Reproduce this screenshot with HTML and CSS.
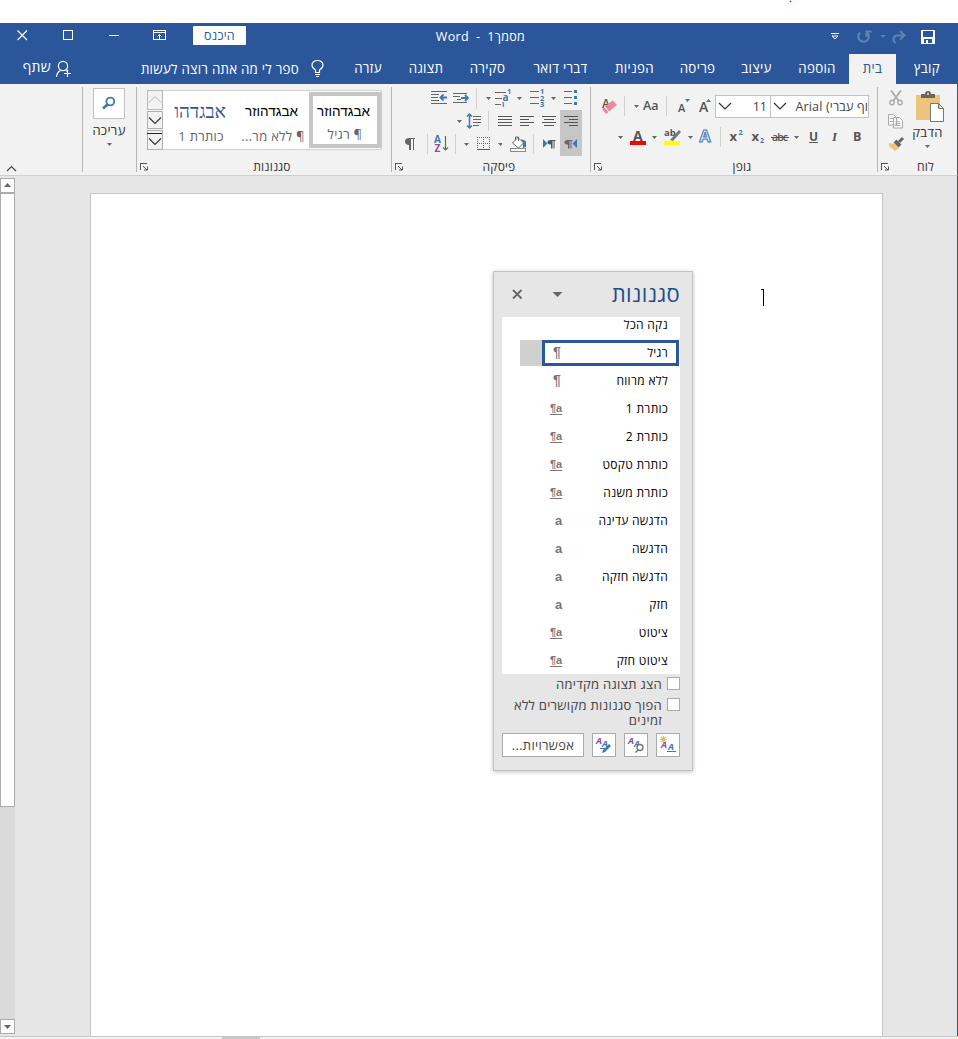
FILE: index.html
```html
<!DOCTYPE html>
<html lang="he">
<head>
<meta charset="utf-8">
<title>Word</title>
<link rel="stylesheet" href="styles.css">
</head>
<body>
<div class="app">
  <div class="strip"><svg width="958" height="23" viewBox="0 0 958 23"><path d="M789 1h3v1h-3zM790 0h1v3h-1z" fill="#fbb"/><path d="M790 1h1v1h-1z" fill="#e00"/></svg></div>

  <header class="titlebar">
    <svg width="193" height="31" viewBox="0 23 193 31" fill="none" stroke="#fff">
      <path d="M17.500 30.500l9.500 9.500M27 30.500l-9.500 9.500" stroke-width="1.100"/>
      <path class="crisp" d="M63.500 30.500h9v9h-9zM109 35.500h10M153.500 30.500h12v9h-12zM153 32.500h13"/>
      <path d="M159.500 39v-4.500M157.500 36.500l2-2 2 2"/>
    </svg>
    <button class="signin" dir="rtl">היכנס</button>
    <div class="doc-title" dir="rtl">מסמך1  -  Word</div>
    <svg width="243" height="31" viewBox="715 23 243 31" fill="none" stroke="#fff">
      <path class="crisp" d="M831 33.500h8"/><path d="M832 36l3 3 3-3z"/>
      <g stroke="#5f82b8" stroke-width="2"><path d="M860 32.500a5.300 5.300 0 1 0 6.500-.5M866.500 37v-5.500h5M904 35.500h-6.500q-4 0-4 4.500 0 2 2 3M900 31l4.500 4.500-4.500 4"/></g>
      <path d="M880.500 35h5l-2.500 3z" fill="#5f82b8" stroke="none"/>
      <path class="crisp" fill="#fff" stroke="none" fill-rule="evenodd" d="M921 30h14v14h-14zM923 31v6h10v-6zM924 39v4h2v-3h2v3h4v-4z"/>
    </svg>
  </header>

  <nav class="tabs">
    <span class="share" dir="rtl">שתף</span>
    <svg width="25" height="30" viewBox="51 54 25 30" fill="none" stroke="#fff" stroke-width="1.200"><circle cx="63" cy="66" r="4.600"/><path d="M56.500 77q.5-5 4-6.500M66 70.500l1.500 1M67.500 69.500v7.500M64 73.500h7"/></svg>
    <span class="tell" dir="rtl">ספר לי מה אתה רוצה לעשות</span>
    <svg width="41" height="30" viewBox="299 54 41 30" fill="none" stroke="#fff" stroke-width="1.200"><path d="M315.500 72.500v-2.500q-3.500-2-3.500-5a5.500 4.500 0 0 1 11 0q0 3-3.500 5v2.500zM315 74.500h5M316 76.500h3"/></svg>
    <span dir="rtl">עזרה</span><span dir="rtl">תצוגה</span><span dir="rtl">סקירה</span><span dir="rtl">דברי דואר</span><span dir="rtl">הפניות</span><span dir="rtl">פריסה</span><span dir="rtl">עיצוב</span><span dir="rtl">הוספה</span><span class="active" dir="rtl">בית</span><span dir="rtl">קובץ</span>
  </nav>

  <section class="ribbon">
    <div class="group g-blank">
      <svg width="82" height="91" viewBox="0 84 82 91" fill="none" stroke="#444" stroke-width="1.200"><path d="M7 171l4.500-4.500 4.500 4.500"/></svg>
    </div>
    <div class="group g-edit">
      <div class="find"><svg width="30" height="29" viewBox="94 89 30 29" fill="none" stroke="#3f78b5"><circle cx="110.300" cy="101.500" r="3.900" stroke-width="1.800"/><path d="M107.500 104.500l-4.500 4" stroke-width="2.800"/></svg></div>
      <span class="cap edit-cap" dir="rtl">עריכה</span>
      <svg width="7" height="5" viewBox="0 0 7 5"><path d="M1 1h5l-2.500 3z" fill="#666"/></svg>
    </div>
    <div class="group g-styles">
      <div class="body">
        <div class="gallery">
          <div class="spin">
            <svg width="16" height="20" viewBox="147 90 16 20" fill="none" stroke="#b8b8b8"><path class="crisp" d="M147.500 90.500h15v19h-15z"/><path d="M149 102.500l6-6 6 6"/></svg>
            <svg width="16" height="20" viewBox="147 110 16 20" fill="none" stroke="#b0b0b0"><path class="crisp" d="M147.500 111.500h15v17h-15z"/><path stroke="#333" stroke-width="1.200" d="M149 117.500l6 6 6-6"/></svg>
            <svg width="16" height="20" viewBox="147 130 16 20" fill="none" stroke="#b0b0b0"><path class="crisp" d="M147.500 130.500h15v18.500h-15z"/><path class="crisp" stroke="#222" d="M147 133.500h15"/><path stroke="#333" stroke-width="1.200" d="M149 138.500l6 6 6-6"/></svg>
          </div>
          <div class="style h1"><b dir="rtl">אבגדהו</b><i dir="rtl">כותרת 1</i></div>
          <div class="style"><b dir="rtl">אבגדהוזר</b><i dir="rtl">¶ ללא מר...</i></div>
          <div class="style on"><b dir="rtl">אבגדהוזר</b><i dir="rtl">¶ רגיל</i></div>
        </div>
      </div>
      <footer><svg width="16" height="16" viewBox="0 0 16 16" fill="none" stroke="#555"><path class="crisp" d="M3.500 11V4.500H10"/><path d="M6 7l4 4M10.500 7.500v3.500H7"/></svg><span dir="rtl">סגנונות</span></footer>
    </div>
    <div class="group g-para">
      <div class="body rows">
        <div class="row r1">
          <svg width="84" height="24" viewBox="392 87 84 24" fill="none" stroke="#666"><path class="crisp" d="M431 91.500h16M431 94.500h8M431 97.500h7M431 100.500h8M431 103.500h16M453 93.500h14M453 96.500h7M457 99.500h4M453 102.500h14"/><path d="M447 97.500h-6M443.500 94.500l-3 3 3 3M461 98h7M465 95l3 3-3 3" stroke="#3f78b5" stroke-width="1.800"/></svg>
          <svg width="48" height="24" viewBox="476 87 48 24" fill="none" stroke="#666"><path class="crisp" stroke="#d0d0d0" d="M476.500 88v21"/><path class="crisp" d="M495 92.500h11M495 98.500h7M495 104.500h6"/><path fill="#666" stroke="none" d="M486 97h5l-2.500 3zM517 97h5l-2.500 3z"/><g class="num"><text x="507" y="94">1</text><text x="502.500" y="101" font-size="10">a</text><text x="502" y="107">i</text></g></svg>
          <svg width="34" height="24" viewBox="524 87 34 24" fill="none" stroke="#666"><path class="crisp" d="M530 91.500h9M530 97.500h9M530 103.500h9"/><path fill="#666" stroke="none" d="M551 97h5l-2.500 3z"/><g class="num"><text x="540" y="94">1</text><text x="540" y="100.500">2</text><text x="540" y="107">3</text></g></svg>
          <svg width="32" height="24" viewBox="558 87 32 24" fill="none" stroke="#666"><path class="crisp" d="M564 91.500h8M564 97.500h8M564 103.500h8"/><path fill="#3f78b5" stroke="none" d="M574 90h3v3h-3zM574 96h3v3h-3zM574 102h3v3h-3z"/></svg>
        </div>
        <div class="row r2">
          <svg width="97" height="22" viewBox="392 110 97 22" fill="none" stroke="#666"><path fill="#666" stroke="none" d="M457 120h5l-2.500 3z"/><path d="M469.500 114v14M467 116.500l2.500-2.500 2.500 2.500M467 125.500l2.500 2.500 2.500-2.500" stroke="#3f78b5" stroke-width="1.500"/><path class="crisp" d="M473 116.500h8M473 119.500h8M473 122.500h8M473 125.500h6"/><path class="crisp" stroke="#d0d0d0" d="M488.500 111v20"/></svg>
          <svg width="71" height="22" viewBox="489 110 71 22" stroke="#555"><path class="crisp" d="M498 116.500h14M498 119.500h14M498 122.500h14M498 125.500h14M520 116.500h14M520 119.500h9M520 122.500h14M520 125.500h9M542 116.500h14M544 119.500h10M542 122.500h14M544 125.500h10"/></svg>
          <svg class="pressed" width="22" height="22" viewBox="560 110 22 22" stroke="#555"><path class="crisp" d="M564 116.500h14M569 119.500h9M564 122.500h14M569 125.500h9"/></svg>
        </div>
        <div class="row r3">
          <svg width="35" height="24" viewBox="392 132 35 24"><path fill="#666" fill-rule="evenodd" d="M409 145q-4-.3-4-3.500t4-3.500h6v1h-1v11h-1v-11h-2v11h-2z"/></svg>
          <svg width="29" height="24" viewBox="427 132 29 24"><path class="crisp" stroke="#d0d0d0" d="M427.500 134v20M455.500 134v20"/><g class="az"><text x="434" y="143" fill="#3f78b5">A</text><text x="434.500" y="152" fill="#8c4fa8">Z</text></g><path d="M445.500 136v14M443 147.500l2.500 2.500 2.500-2.500" fill="none" stroke="#666" stroke-width="1.200"/></svg>
          <svg width="46" height="24" viewBox="456 132 46 24"><path fill="#666" d="M464 143h5l-2.500 3zM498 143h5l-2.500 3z"/><path class="crisp" d="M477 137.500h14M477.500 137v12M483.500 137v12M489.500 137v12M477 143.500h14" stroke="#666" stroke-dasharray="1 1"/><path class="crisp" d="M477 149.500h13" stroke="#555"/></svg>
          <svg width="31" height="24" viewBox="502 132 31 24" fill="none" stroke="#666"><path fill="#3f78b5" stroke="none" d="M521 139l5 2v6l-3 1v-5z"/><path fill="#fff" d="M512.500 143l5.500-5.500 5.500 5.500-5 5zM515.500 140v-3h3v4"/><path class="crisp" fill="#fff" stroke="#888" d="M510.500 148.500h15v3h-15z"/></svg>
          <svg width="27" height="24" viewBox="533 132 27 24"><path class="crisp" stroke="#d0d0d0" d="M533.500 134v20"/><path fill="#3f78b5" d="M543 139v9l4.500-4.500z"/><path fill="#555" d="M551 144.500q-3.500 0-3.500-2.300t3.500-2.200h4.500v1h-1v7.500h-1v-7.500h-1v7.500h-1.500z"/></svg>
          <svg class="pressed" width="22" height="24" viewBox="560 132 22 24"><path fill="#3f78b5" d="M577 139v9l-4.500-4.500z"/><path fill="#666" d="M568 144.500q-3.500 0-3.500-2.300t3.500-2.200h4.500v1h-1v7.500h-1v-7.500h-1v7.500h-1.500z"/></svg>
        </div>
      </div>
      <footer><svg width="16" height="16" viewBox="0 0 16 16" fill="none" stroke="#555"><path class="crisp" d="M3.500 11V4.500H10"/><path d="M6 7l4 4M10.500 7.500v3.500H7"/></svg><span dir="rtl">פיסקה</span></footer>
    </div>
    <div class="group g-font">
      <div class="body rows">
        <div class="row f1">
          <svg width="33" height="26" viewBox="591 93 33 26"><text x="602" y="108" class="glyph" font-size="12">A</text><g transform="rotate(-40 610 107)"><path fill="#e8899c" d="M606.500 103.500h10v6.500h-10z"/><path fill="#e8899c" d="M602.500 103.500h3v6.500h-3z"/></g></svg>
          <svg width="42" height="26" viewBox="624 93 42 26"><path class="crisp" stroke="#d0d0d0" d="M624.500 96v20"/><path fill="#666" d="M634 105h5l-2.500 3z"/><text x="643" y="110" class="glyph" font-size="12.500" textLength="15.500">Aa</text></svg>
          <svg width="49" height="26" viewBox="666 93 49 26"><path class="crisp" stroke="#d0d0d0" d="M666.500 96v20"/><path fill="#3f78b5" d="M685 99h5l-2.500 3zM706 102h5l-2.500-3z"/><text x="678" y="112" class="glyph" font-size="11">A</text><text x="699" y="112" class="glyph" font-size="14">A</text></svg>
          <div class="combo size"><svg width="18" height="20" viewBox="0 0 18 20"><path d="M3 7l6 6 6-6" fill="none" stroke="#333" stroke-width="1.200"/></svg><span>11</span></div>
          <div class="combo face"><svg width="18" height="20" viewBox="0 0 18 20"><path d="M3 7l6 6 6-6" fill="none" stroke="#333" stroke-width="1.200"/></svg><span dir="rtl">וף עברי) Arial</span></div>
        </div>
        <div class="row f2">
          <svg width="68" height="24" viewBox="591 126 68 24"><path fill="#666" d="M618 136h5l-2.500 3zM652 136h5l-2.500 3z"/><text x="633" y="141" class="glyph bold" font-size="14">A</text><path fill="#f00" d="M630 141h16v4h-16z"/></svg>
          <svg width="34" height="24" viewBox="659 126 34 24"><text x="664" y="136" class="glyph bold" font-size="9.500">ab</text><path fill="#777" d="M679 130l2 2-8 9-3-1z"/><path fill="#ff0" d="M664 141h16v4h-16z"/><path fill="#666" d="M688 136h5l-2.500 3z"/></svg>
          <svg width="28" height="24" viewBox="693 126 28 24"><text x="699.500" y="142" font-size="16" class="halo">A</text><text x="699.500" y="142" font-size="16" class="fx" aria-hidden="true"></text><path class="crisp" stroke="#d0d0d0" d="M720.500 127v20"/></svg>
          <svg width="48" height="24" viewBox="721 126 48 24"><text x="729.500" y="141" class="glyph bold" font-size="13">x</text><text x="738.500" y="135" class="sub">2</text><text x="751.500" y="141" class="glyph bold" font-size="13">x</text><text x="760" y="143" class="sub">2</text></svg>
          <svg width="33" height="24" viewBox="769 126 33 24"><text x="772" y="141" class="glyph" font-size="10.500" textLength="16">abc</text><path class="crisp" stroke="#555" d="M771 137.500h18"/><path fill="#666" d="M794 136h5l-2.500 3z"/></svg>
          <svg width="75" height="24" viewBox="802 126 75 24"><text x="809" y="141" class="glyph bold" font-size="12">U</text><path class="crisp" stroke="#555" d="M809 142.500h9"/><text x="832" y="141" class="ital">I</text><text x="853" y="141" class="glyph bold" font-size="12.500">B</text></svg>
        </div>
      </div>
      <footer><svg width="16" height="16" viewBox="0 0 16 16" fill="none" stroke="#555"><path class="crisp" d="M3.500 11V4.500H10"/><path d="M6 7l4 4M10.500 7.500v3.500H7"/></svg><span dir="rtl">גופן</span></footer>
    </div>
    <div class="group g-clip">
      <div class="body clip">
        <svg width="32" height="75" viewBox="878 84 32 75" fill="none" stroke="#aaa">
          <path stroke-width="1.800" d="M891 90.500l7.500 10M901 90.500l-7.500 10"/><circle cx="892" cy="102.500" r="2.200" stroke-width="1.400"/><circle cx="900" cy="102.500" r="2.200" stroke-width="1.400"/>
          <path fill="#f7f7f7" d="M888.500 114.500h5l3 3v7.500h-8zM893.500 117.500h6l3 3v7.500h-9z"/><path d="M890 118.500h3M890 121.500h3M895.500 121.500h4M895.500 123.500h5M895.500 125.500h5"/>
          <path fill="#ecc57c" stroke="none" d="M889 143l6 1 4 4-4 3-6-5z"/><path stroke="#666" stroke-width="4" d="M895 141l5 5"/><path stroke="#666" stroke-width="3" d="M899 142l4-4"/>
        </svg>
        <div class="paste">
          <svg width="47" height="39" viewBox="910 84 47 39"><path fill="#ecc57c" d="M916 95h24v25h-24z"/><path fill="#666" d="M921 98v-4h4q0-3 3-3t3 3h4v4z"/><path fill="#ecc57c" d="M927 93h2v2h-2z"/><path fill="#fff" stroke="#777" d="M930.500 103.500h8l5 5v13h-13zM938.500 103.500v5h5"/></svg>
          <span class="cap" dir="rtl">הדבק</span>
          <svg width="7" height="5" viewBox="0 0 7 5"><path d="M1 1h5l-2.500 3z" fill="#666"/></svg>
        </div>
      </div>
      <footer><svg width="16" height="16" viewBox="0 0 16 16" fill="none" stroke="#555"><path class="crisp" d="M3.500 11V4.500H10"/><path d="M6 7l4 4M10.500 7.500v3.500H7"/></svg><span dir="rtl">לוח</span></footer>
    </div>
  </section>

  <main class="work">
    <div class="vscroll">
      <div class="sbtn"><svg width="13" height="13" viewBox="0 0 13 13"><path fill="#666" d="M3 8h7l-3.500-4z"/></svg></div>
      <div class="thumb"></div>
      <div class="track"></div>
      <div class="sbtn"><svg width="13" height="13" viewBox="0 0 13 13"><path fill="#666" d="M3 5h7l-3.500 4z"/></svg></div>
    </div>
    <div class="sheet"><svg width="6" height="18" viewBox="760 288 6 18"><path class="crisp" fill="#000" d="M761 289h3v1h-3zM763 289h1v17h-1z"/></svg></div>

    <aside class="pane">
      <div class="pane-head">
        <svg width="80" height="30" viewBox="494 279 80 30"><path d="M513 290l8.500 8.500M521.500 290l-8.500 8.500" stroke="#666" stroke-width="1.800"/><path fill="#666" d="M552.500 292h10l-5 5z"/></svg>
        <h2 dir="rtl">סגנונות</h2>
      </div>
      <ul class="list">
        <li class="first"><span dir="rtl">נקה הכל</span></li>
        <li class="sel"><div class="box"><em class="p">¶</em><span dir="rtl">רגיל</span></div></li>
        <li><em class="p">¶</em><span dir="rtl">ללא מרווח</span></li>
        <li><em class="pa">¶a</em><span dir="rtl">כותרת 1</span></li>
        <li><em class="pa">¶a</em><span dir="rtl">כותרת 2</span></li>
        <li><em class="pa">¶a</em><span dir="rtl">כותרת טקסט</span></li>
        <li><em class="pa">¶a</em><span dir="rtl">כותרת משנה</span></li>
        <li><em class="a">a</em><span dir="rtl">הדגשה עדינה</span></li>
        <li><em class="a">a</em><span dir="rtl">הדגשה</span></li>
        <li><em class="a">a</em><span dir="rtl">הדגשה חזקה</span></li>
        <li><em class="a">a</em><span dir="rtl">חזק</span></li>
        <li><em class="pa">¶a</em><span dir="rtl">ציטוט</span></li>
        <li><em class="pa">¶a</em><span dir="rtl">ציטוט חזק</span></li>
      </ul>
      <label class="check c1"><span dir="rtl">הצג תצוגה מקדימה</span><i></i></label>
      <label class="check c2"><span dir="rtl">הפוך סגנונות מקושרים ללא<br>זמינים</span><i></i></label>
      <div class="buttons">
        <button class="opts" dir="rtl">אפשרויות...</button>
        <button><svg width="22" height="22" viewBox="593 734 22 22"><text x="596" y="744" class="mini pu">A</text><text x="602" y="747" class="mini bl">A</text><path d="M602 753l1-3 6-6 2 2-6 6z" fill="#3f78b5"/><path stroke="#3f78b5" d="M600 748.500h5"/></svg></button>
        <button><svg width="22" height="22" viewBox="625 734 22 22"><text x="628" y="744" class="mini pu">A</text><text x="634" y="747" class="mini bl">A</text><circle cx="640" cy="747.500" r="3" fill="#fff" stroke="#777" stroke-width="1.400"/><path stroke="#777" stroke-width="1.600" d="M638 750l-2.500 2.500"/></svg></button>
        <button><svg width="22" height="22" viewBox="657 734 22 22"><path stroke="#e8b75a" stroke-width="1.100" d="M663.500 736v7M660 739.500h7M661 737l5 5M666 737l-5 5"/><text x="661" y="748" class="mini pu">A</text><text x="668" y="750" class="mini bl">A</text><path stroke="#3f78b5" d="M667 751.500h9"/></svg></button>
      </div>
    </aside>
  </main>
  <div class="hscroll"><div></div></div>
</div>
</body>
</html>
```
FILE: styles.css
```css
* { box-sizing: border-box; }
body { margin: 0; background: #fff; font-family: "Open Sans", "Noto Sans", "DejaVu Sans", sans-serif; font-size: 13px; color: #444; }
.app { width: 958px; height: 1039px; overflow: hidden; display: flex; flex-direction: column; }
svg { display: block; flex: none; }
span, b, i, h2 { white-space: nowrap; }
button { font-family: inherit; padding: 0; }
.crisp { shape-rendering: crispEdges; }
.strip { height: 23px; }

.titlebar { height: 31px; background: #2b579a; color: #fff; display: flex; }
.signin { width: 53px; height: 19px; margin-top: 3px; background: #fff; color: #2b579a; border: 0; border-radius: 1px; font-size: 12.5px; line-height: 18px; letter-spacing: .2px; }
.doc-title { flex: 1; text-align: center; white-space: pre; font-size: 12.5px; line-height: 27px; letter-spacing: .3px; }

.tabs { height: 30px; background: #2b579a; color: #fff; display: grid; grid-template-columns: 51px 25px 223px 41px 56px 60px 63px 83px 65px 61px 57px 64px 47px 62px; line-height: 29px; text-align: center; font-size: 13.3px; letter-spacing: .3px; }
.tabs .share, .tabs .tell { text-align: right; }
.tabs .share { line-height: 26px; font-size: 14px; }
.tabs .tell { line-height: 30px; letter-spacing: .26px; }
.tabs .active { background: #f2f2f2; color: #2b579a; }

.ribbon { height: 92px; background: #f2f2f2; border-bottom: 1px solid #d0d0d0; border-right: 1px solid #2b579a; display: flex; flex: none; }
.group { border-right: 1px solid transparent; border-image: linear-gradient(to bottom, transparent 4px, #b5b5b5 4px, #b5b5b5 87px, transparent 87px) 1; display: flex; flex-direction: column; flex: none; }
.g-blank { width: 83px; }
.g-edit { width: 54px; align-items: center; padding: 4px 1px 0 0; }
.g-styles { width: 255px; }
.g-para { width: 199px; }
.g-font { width: 287px; }
.g-clip { width: 79px; border: 0; }
.body { height: 75px; }
footer { height: 16px; display: flex; font-size: 12px; line-height: 15px; letter-spacing: .2px; color: #333; }
footer span { flex: 1; text-align: center; }
.cap { font-size: 13px; line-height: 18px; letter-spacing: .3px; color: #333; }
.find { width: 32px; height: 31px; background: #fff; border: 1px solid #c2c2c2; }
.edit-cap { margin: 2px 0 3px; }

.gallery { margin: 6px 0 0 10px; width: 235px; height: 60px; background: #fff; border: 1px solid #d0d0d0; border-left: 0; display: flex; }
.spin { width: 16px; height: 60px; margin: -1px 2px 0 0; background: #f2f2f2; flex: none; }
.style { width: 72px; height: 58px; flex: none; display: flex; flex-direction: column; align-items: center; padding: 12px 0 0 0; }
.style b { font: 13.5px/18px "Liberation Sans", sans-serif; color: #000; width: 54px; margin-right: 4px; overflow: hidden; }
.style i { font-style: normal; font-size: 13px; line-height: 20px; margin-top: 5px; color: #666; letter-spacing: .3px; }
.style.h1 b { font: 19px/18px "Liberation Serif", serif; color: #2f5496; }
.style.on { height: 56px; margin-top: 1px; border: 4px solid #c6c6c6; padding: 7px 0 0; }
.style.on i { margin-top: 6px; }

.row { display: flex; }
.r1 { padding-top: 3px; height: 26px; }
.pressed { background: #c6c6c6; }
.num { font: 700 7.5px "Open Sans", sans-serif; fill: #3f78b5; stroke: none; }
.az { font: 700 10px "Open Sans", sans-serif; }
.glyph { font-family: "Open Sans", sans-serif; font-weight: 600; fill: #555; }
.glyph.bold { font-weight: 700; }
.halo { font-family: "Open Sans", sans-serif; font-weight: 700; fill: #fff; stroke: #3f78b5; stroke-width: 1.1px; }
.sub { font: 700 7px "Open Sans", sans-serif; fill: #3f78b5; }
.ital { font: italic 700 13px "Liberation Serif", serif; fill: #555; }
.f1 { padding-top: 9px; height: 42px; }
.combo { height: 23px; margin-top: 2px; background: #fff; border: 1px solid #c2c2c2; display: flex; font-size: 12.5px; line-height: 21px; overflow: hidden; }
.combo.size { width: 56px; }
.combo.size span { flex: 1; text-align: right; padding-right: 3px; }
.combo.face { width: 98px; border-left: 0; }
.combo.face span { flex: 1; text-align: right; letter-spacing: .15px; }
.clip { display: flex; }
.paste { width: 47px; display: flex; flex-direction: column; align-items: center; padding-right: 12px; }
.paste svg:first-child { align-self: flex-start; }
.paste .cap { margin-bottom: 3px; }

.work { height: 860px; background: #e6e6e6; border-right: 1px solid #2b579a; position: relative; display: flex; flex: none; }
.vscroll { width: 15px; padding: 2px 0; display: flex; flex-direction: column; }
.sbtn { width: 15px; height: 15px; background: #fff; border: 1px solid #ababab; flex: none; }
.thumb { height: 614px; background: #fff; border: 1px solid #ababab; flex: none; }
.track { flex: 1; background: #dadada; }
.sheet { width: 793px; height: 843px; margin: 17px 0 0 75px; padding: 94px 0 0 669px; background: #fff; border: 1px solid #c6c6c6; border-bottom: 0; }
.pane { position: absolute; left: 493px; top: 95px; width: 200px; height: 500px; background: #e6e6e6; border: 1px solid #c3c3c3; box-shadow: 0 1px 4px rgba(0,0,0,.25); padding: 7px 12px 0 8px; }
.pane-head { display: flex; justify-content: space-between; height: 38px; margin-left: -8px; }
h2 { margin: 0; font-weight: 400; font-size: 22px; line-height: 29px; letter-spacing: .3px; color: #1e4e8c; }
.list { list-style: none; margin: 0; padding: 0; height: 357px; background: #fff; overflow: hidden; font-size: 12px; letter-spacing: .3px; color: #000; }
.list li { height: 28px; line-height: 27px; display: flex; justify-content: space-between; padding: 0 12px 0 48px; }
.list li.first { height: 22px; line-height: 15px; justify-content: flex-end; }
.list li.sel { padding: 1px 1px 1px 18px; }
.sel .box { flex: 1; border: 3px solid #2b579a; box-shadow: -22px 0 0 #d0d0d0; margin-left: 22px; display: flex; justify-content: space-between; line-height: 19px; padding: 0 8px; }
em { font-style: normal; color: #777; font-family: "Liberation Sans", sans-serif; letter-spacing: 0; }
.p { font-size: 14px; font-weight: 700; padding-left: 3px; }
.sel .box .p { padding-left: 0; }
.pa { font-size: 11px; font-weight: 700; text-decoration: underline; text-underline-offset: 2px; }
.a { font-size: 13px; font-weight: 700; padding-left: 5px; }
.check { display: flex; justify-content: flex-end; gap: 5px; line-height: 15px; letter-spacing: .29px; }
.check i { width: 13px; height: 13px; background: #fff; border: 1px solid #ababab; flex: none; }
.c1 { padding-top: 3px; height: 24px; }
.c2 { height: 35px; }
.buttons { display: flex; justify-content: space-between; }
.buttons button { width: 24px; height: 24px; background: #fff; border: 1px solid #ababab; }
.buttons .opts { width: 82px; color: #444; font-size: 13px; line-height: 20px; letter-spacing: .3px; }
.mini { font: italic 700 9.5px "Open Sans", sans-serif; }
.pu { fill: #8c4fa8; }
.bl { fill: #3f78b5; }
.hscroll { height: 3px; background: #f2f2f2; border-top: 1px solid #c6c6c6; }
.hscroll div { width: 38px; height: 2px; margin-left: 222px; background: #c6c6c6; }
```
